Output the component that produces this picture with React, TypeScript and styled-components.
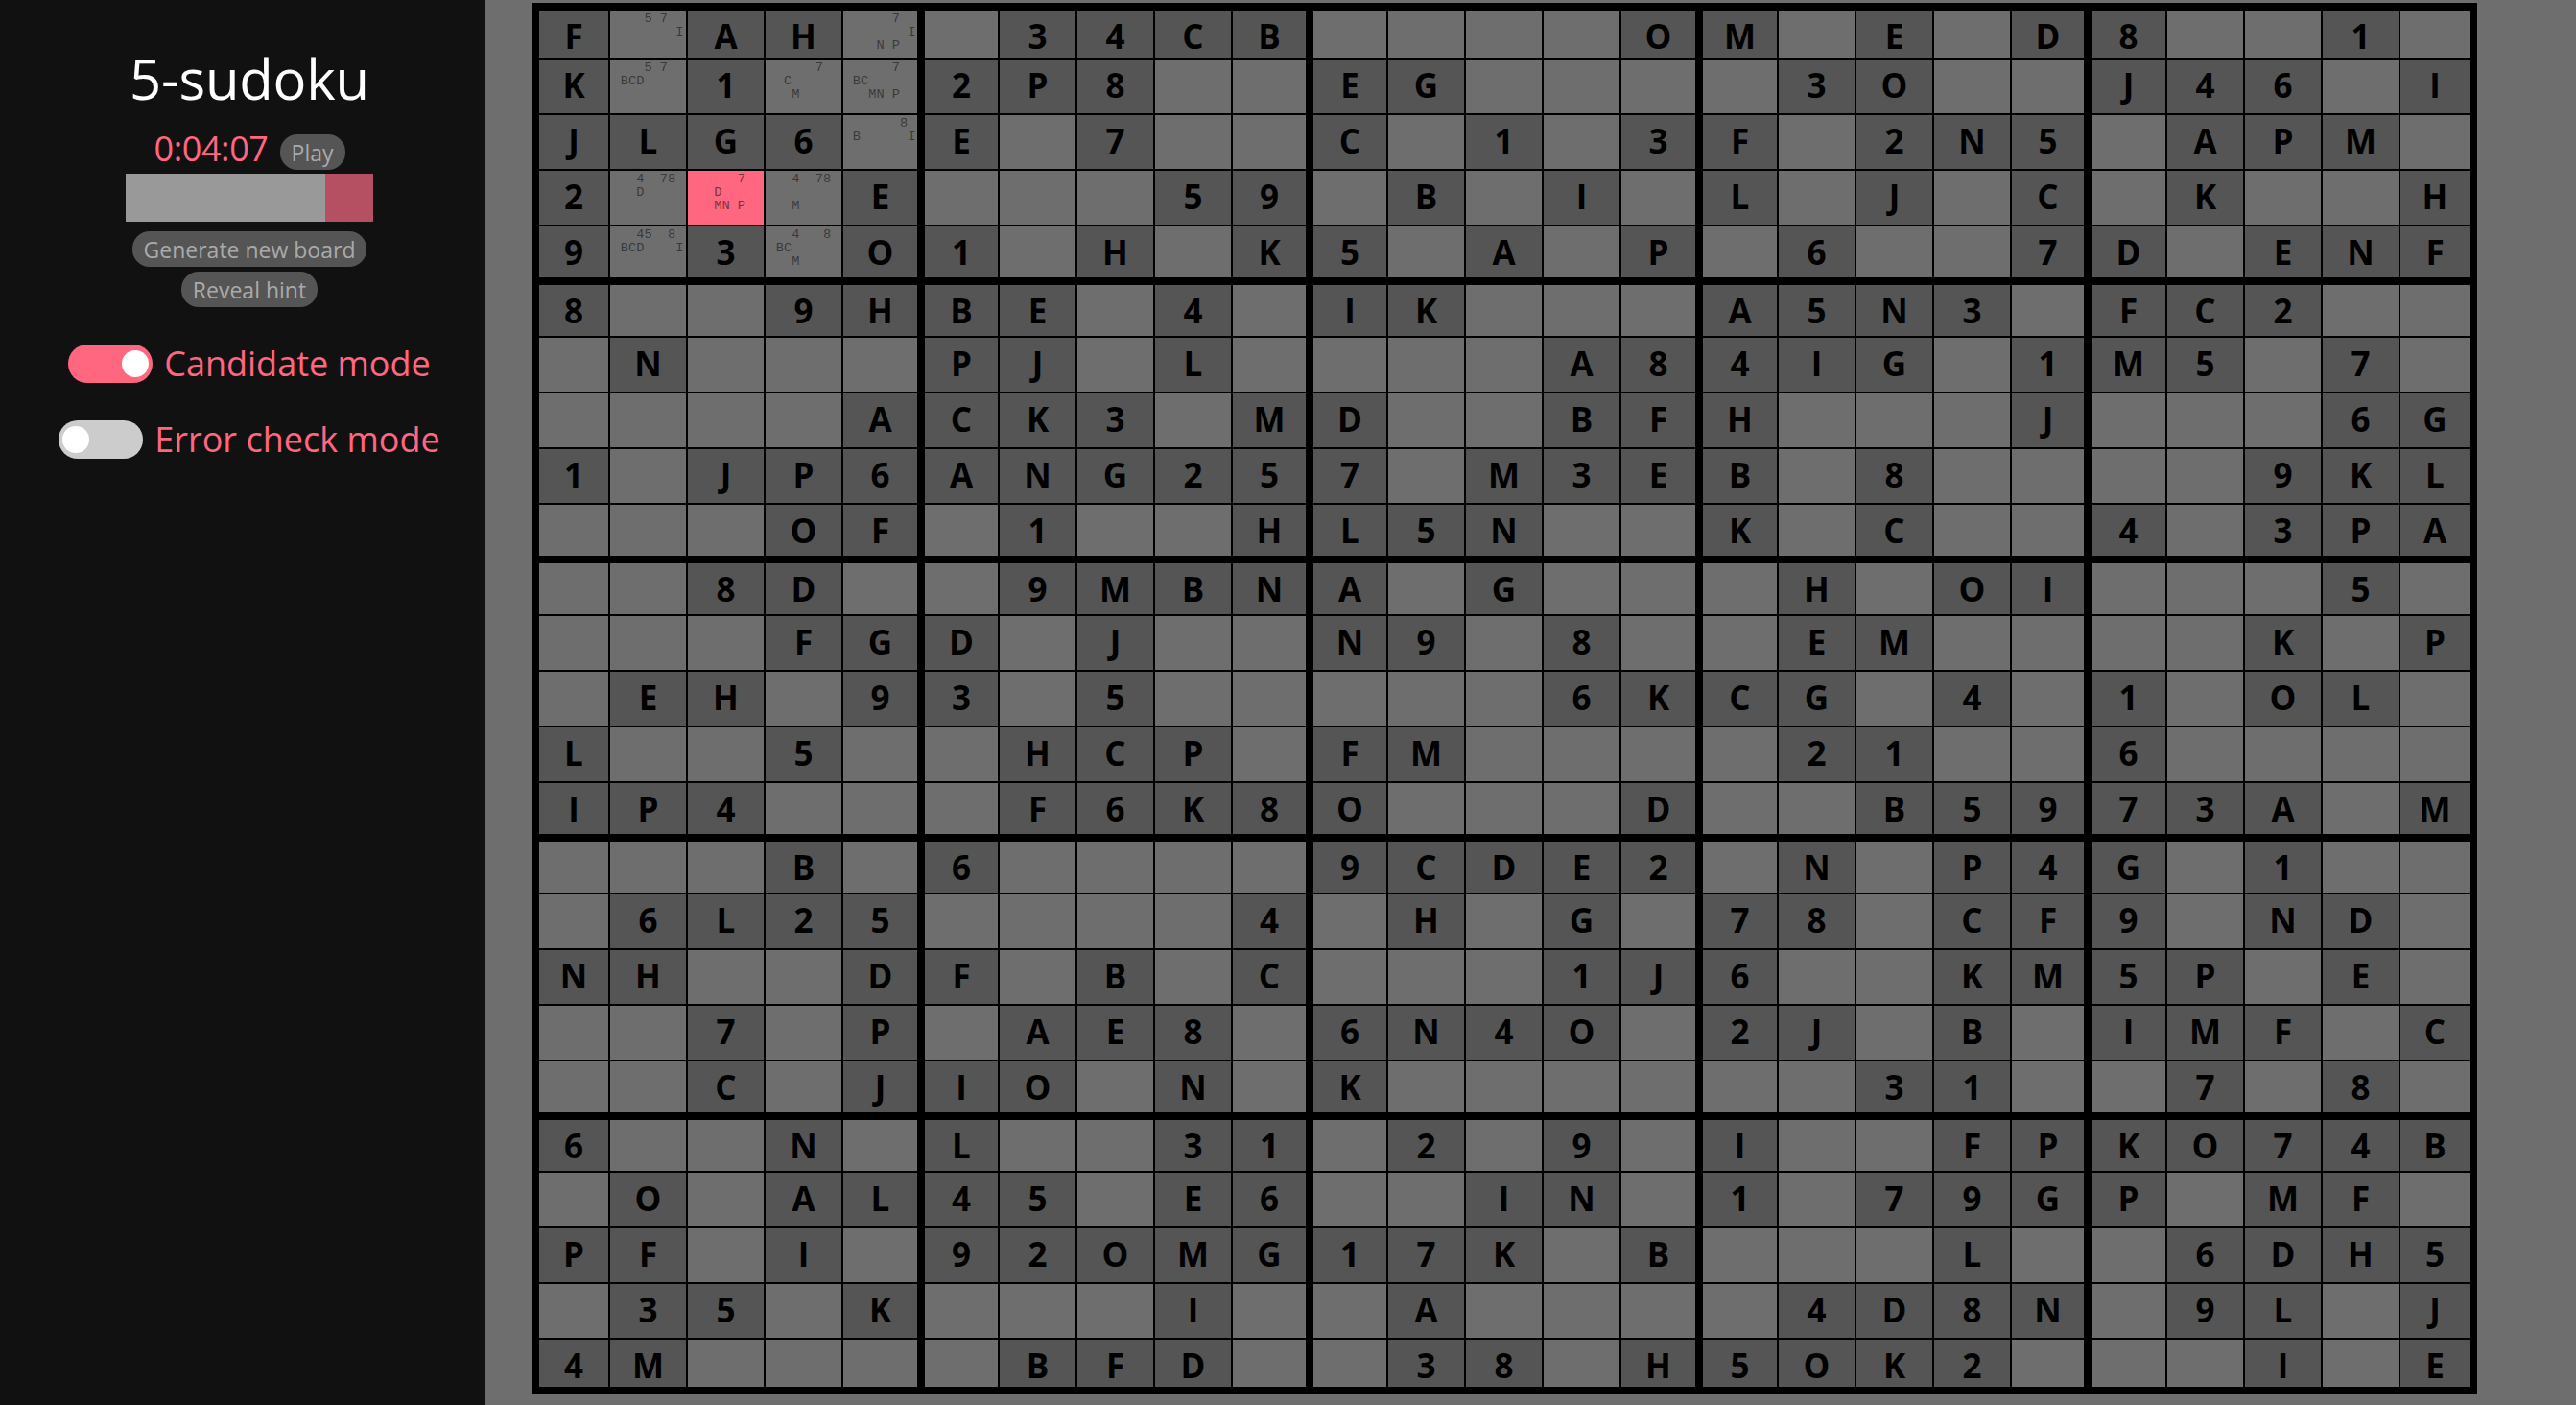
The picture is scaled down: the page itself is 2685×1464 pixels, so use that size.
import React from 'react';
import styled, {createGlobalStyle} from 'styled-components';

const ROWS = [
  'F.AH..34CB....OM.E.D8..1.',
  'K.1..2P8..EG....3O..J46.I',
  'JLG6.E.7..C.1.3F.2N5.APM.',
  '2...E...59.B.I.L.J.C.K..H',
  '9.3.O1.H.K5.A.P.6..7D.ENF',
  '8..9HBE.4.IK...A5N3.FC2..',
  '.N...PJ.L....A84IG.1M5.7.',
  '....ACK3.MD..BFH...J...6G',
  '1.JP6ANG257.M3EB.8....9KL',
  '...OF.1..HL5N..K.C..4.3PA',
  '..8D..9MBNA.G...H.OI...5.',
  '...FGD.J..N9.8..EM....K.P',
  '.EH.93.5.....6KCG.4.1.OL.',
  'L..5..HCP.FM....21..6....',
  'IP4...F6K8O...D..B5973A.M',
  '...B.6....9CDE2.N.P4G.1..',
  '.6L25....4.H.G.78.CF9.ND.',
  'NH..DF.B.C...1J6..KM5P.E.',
  '..7.P.AE8.6N4O.2J.B.IMF.C',
  '..C.JIO.N.K......31..7.8.',
  '6..N.L..31.2.9.I..FPKO74B',
  '.O.AL45.E6..IN.1.79GP.MF.',
  'PF.I.92OMG17K.B...L..6DH5',
  '.35.K...I..A....4D8N.9L.J',
  '4M....BFD..38.H5OK2...I.E',
];

const CANDIDATES: Record<string, string> = {
  '0-1': '57I',
  '0-4': '7INP',
  '1-1': '57BCD',
  '1-3': '7CM',
  '1-4': '7BCMNP',
  '2-4': '8BI',
  '3-1': '478D',
  '3-2': '7DMNP',
  '3-3': '478M',
  '4-1': '458BCDI',
  '4-3': '48BCM',
};

const CANDIDATE_LINES = ['123456789', 'ABCDEFGHI', 'JKLMNOP  '];

const BOX_COLUMNS = [
  [72, 79, 79, 79, 77],
  [76, 79, 79, 79, 76],
  [76, 79, 79, 79, 77],
  [77, 79, 79, 79, 75],
  [77, 79, 79, 79, 72],
];

const BOX_ROWS = [
  [49, 56, 56, 56, 53],
  [53, 56, 56, 56, 53],
  [53, 56, 56, 56, 53],
  [53, 56, 56, 56, 53],
  [53, 56, 56, 56, 49],
];

const sum = (list: number[]) => list.reduce((a, b) => a + b, 0) + 8;
const tracks = (list: number[]) => list.map((n) => `${n}px`).join(' ');

const candidateText = (set: string) =>
  CANDIDATE_LINES.map((line) =>
    line.split('').map((ch) => (set.includes(ch) ? ch : ' ')).join(''),
  ).join('\n');

const App = () => {
  return (
    <Page>
      <GlobalStyle />
      <Sidebar>
        <Title>5-sudoku</Title>
        <TimerRow>
          <Time>0:04:07</Time>
          <PillButton>Play</PillButton>
        </TimerRow>
        <Progress>
          <ProgressFill />
        </Progress>
        <ButtonStack>
          <PillButton>Generate new board</PillButton>
          <PillButton>Reveal hint</PillButton>
        </ButtonStack>
        <ToggleRow>
          <Track $on><Knob /></Track>
          <ToggleLabel>Candidate mode</ToggleLabel>
        </ToggleRow>
        <ToggleRow>
          <Track><Knob /></Track>
          <ToggleLabel>Error check mode</ToggleLabel>
        </ToggleRow>
      </Sidebar>
      <Main>
        <Board>
          {BOX_ROWS.map((rowSizes, boxRow) =>
            BOX_COLUMNS.map((colSizes, boxCol) => (
              <Box key={`${boxRow}-${boxCol}`} $rows={tracks(rowSizes)} $cols={tracks(colSizes)}>
                {rowSizes.map((_, y) =>
                  colSizes.map((_, x) => {
                    const r = boxRow * 5 + y;
                    const c = boxCol * 5 + x;
                    const value = ROWS[r][c];
                    const candidates = CANDIDATES[`${r}-${c}`];
                    return (
                      <Cell key={`${y}-${x}`} $given={value !== '.'} $selected={r === 3 && c === 2}>
                        {value !== '.' && value}
                        {candidates && <Candidates>{candidateText(candidates)}</Candidates>}
                      </Cell>
                    );
                  }),
                )}
              </Box>
            )),
          )}
        </Board>
      </Main>
    </Page>
  );
};

const GlobalStyle = createGlobalStyle`
  html, body {
    margin: 0;
    background: #6e6e6e;
  }
`;

const Page = styled.div`
  width: 2685px;
  height: 1464px;
  display: flex;
  overflow: hidden;
  font-family: 'Open Sans', 'Noto Sans', sans-serif;
`;

const Sidebar = styled.aside`
  width: 506px;
  box-sizing: border-box;
  padding: 43px 0 0 14px;
  background: #111111;
  display: flex;
  flex-direction: column;
  align-items: center;
`;

const Title = styled.h1`
  margin: 0;
  height: 97px;
  font-size: 58px;
  line-height: 78px;
  font-weight: 400;
  letter-spacing: -0.2px;
  color: #ffffff;
`;

const TimerRow = styled.div`
  height: 41px;
  display: flex;
  align-items: flex-start;
  gap: 12px;
`;

const Time = styled.span`
  font-size: 36px;
  line-height: 30px;
  letter-spacing: -0.4px;
  color: #ff6680;
`;

const PillButton = styled.button`
  height: 37px;
  padding: 1px 12px 0;
  border: none;
  border-radius: 18px;
  background: #555555;
  color: #aaaaaa;
  font-family: inherit;
  font-size: 23px;
  line-height: 36px;
`;

const Progress = styled.div`
  width: 258px;
  height: 50px;
  background: #b45062;
`;

const ProgressFill = styled.div`
  width: 208px;
  height: 100%;
  background: #999999;
`;

const ButtonStack = styled.div`
  margin-top: 10px;
  display: flex;
  flex-direction: column;
  align-items: center;
  gap: 5px;
`;

const ToggleRow = styled.div`
  margin-top: 38px;
  display: flex;
  align-items: center;
  gap: 12px;
`;

const Track = styled.div<{$on?: boolean}>`
  width: 88px;
  height: 40px;
  box-sizing: border-box;
  padding: 0 4px;
  border-radius: 20px;
  display: flex;
  align-items: center;
  justify-content: ${(props) => (props.$on ? 'flex-end' : 'flex-start')};
  background: ${(props) => (props.$on ? '#ff6680' : '#cccccc')};
`;

const Knob = styled.div`
  width: 28px;
  height: 28px;
  border-radius: 50%;
  background: #ffffff;
`;

const ToggleLabel = styled.span`
  padding-top: 1px;
  font-size: 36px;
  line-height: 40px;
  color: #ff6680;
`;

const Main = styled.main`
  flex: 1;
  padding: 3px 0 0 48px;
`;

const Board = styled.div`
  width: max-content;
  padding: 8px;
  background: #000000;
  display: grid;
  grid-template-columns: ${tracks(BOX_COLUMNS.map(sum))};
  grid-template-rows: ${tracks(BOX_ROWS.map(sum))};
  gap: 8px;
`;

const Box = styled.div<{$rows: string; $cols: string}>`
  display: grid;
  grid-template-columns: ${(props) => props.$cols};
  grid-template-rows: ${(props) => props.$rows};
  gap: 2px;
`;

const Cell = styled.div<{$given: boolean; $selected: boolean}>`
  display: flex;
  flex-direction: column;
  align-items: center;
  overflow: hidden;
  background: ${(props) =>
    props.$selected ? '#ff6680' : props.$given ? '#555555' : '#6e6e6e'};
  color: #000000;
  font-size: 35px;
  line-height: 54px;
  font-weight: 700;
`;

const Candidates = styled.pre`
  margin: 2px 0 0;
  font-family: 'Liberation Mono', monospace;
  font-size: 13.67px;
  line-height: 14px;
  font-weight: 400;
  color: rgba(30, 30, 30, 0.68);
`;

export default App;
